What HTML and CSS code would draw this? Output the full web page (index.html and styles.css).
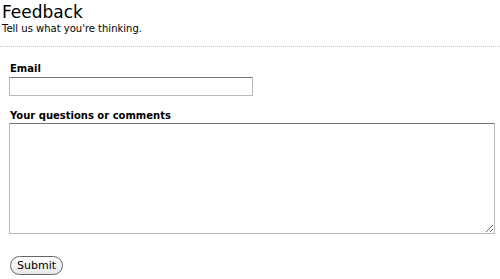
FILE: index.html
```html
<!DOCTYPE html>
<html lang="en">
<head>
  <meta charset="UTF-8">
  <title>Feedback</title>
  <link rel="stylesheet" href="styles.css">
</head>
<body>

  <div class="header">
    <h1>Feedback</h1>
    <p>Tell us what you're thinking.</p>
  </div>

  <form class="feedback" onsubmit="return false">
    <label for="email">Email</label>
    <input type="text" id="email">

    <label for="comments">Your questions or comments</label>
    <textarea id="comments"></textarea>

    <button type="submit">Submit</button>
  </form>

</body>
</html>
```

FILE: styles.css
```css
body {
  margin: 0;
  font-family: "DejaVu Sans", Verdana, sans-serif;
  color: #000;
  background: #fff;
}

.header {
  padding: 2px 2px 0;
  border-bottom: 1px dotted #c8c8c8;
  height: 44px;
}

h1 {
  margin: 0;
  font-size: 17px;
  font-weight: normal;
  line-height: 20px;
}

.header p {
  margin: 0;
  font-size: 10px;
  line-height: 13px;
}

.feedback {
  padding: 15px 5px 0 9px;
}

label {
  display: block;
  font-size: 10px;
  font-weight: bold;
  line-height: 13px;
  margin-left: 1px;
}

input[type="text"] {
  display: block;
  box-sizing: border-box;
  width: 244px;
  height: 19px;
  margin: 2px 0 13px;
  border: 1px solid #bbb;
  border-top-color: #777;
}

textarea {
  display: block;
  box-sizing: border-box;
  width: 486px;
  height: 111px;
  margin: 1px 0 22px;
  border: 1px solid #bbb;
  border-top-color: #777;
  resize: both;
}

button {
  display: block;
  font-family: "DejaVu Sans", Verdana, sans-serif;
  font-size: 11px;
  margin-left: 1px;
  padding: 1px 6px;
  height: 19px;
  background: linear-gradient(#fff, #e8e8e8);
  border: 1px solid #666;
  border-radius: 10px;
}
```
